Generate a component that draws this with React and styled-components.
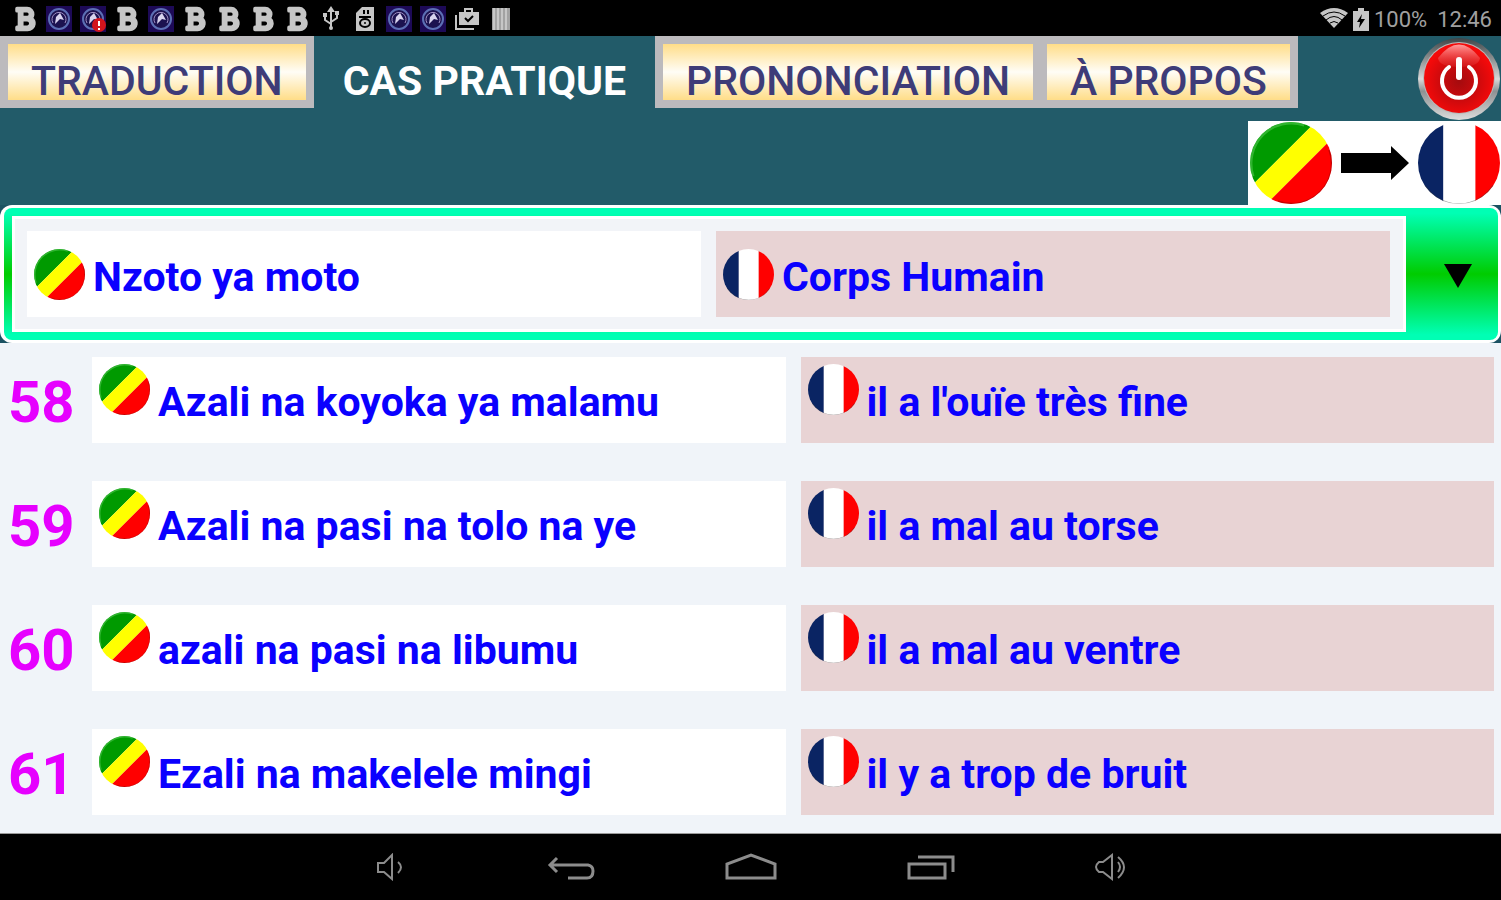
import React, { useRef, useState } from "react"
import styled, { createGlobalStyle } from 'styled-components';
import { FaBold } from 'react-icons/fa';

const GlobalStyle = createGlobalStyle`
    * {
        box-sizing: border-box;
    }

    body {
        margin: 0;
        background-color: #000;
        font-family: Roboto, "Liberation Sans", sans-serif;
    }

    button {
        padding: 0;
        border: none;
        background: none;
        font: inherit;
        cursor: pointer;
    }

    svg {
        display: block;
        flex-shrink: 0;
    }
`;

const Container = styled.div`
    display: flex;
    flex-direction: column;
    min-height: 100vh;
    background-color: #f0f4f9;
`;

const StatusBar = styled.div`
    display: flex;
    align-items: center;
    justify-content: space-between;
    height: 36px;
    padding: 0 9px 0 12px;
    background-color: #000;
    color: #c6c6c6;
`;

const Notifications = styled.div`
    display: flex;
    gap: 8px;
`;

const Slot = styled.span`
    display: flex;
    align-items: center;
    justify-content: center;
    width: 26px;
    height: 28px;
    margin-top: 2px;
`;

const BoldIcon = styled(FaBold)`
    width: 28px;
    height: 26px;
    stroke: currentColor;
    stroke-width: 36;
    overflow: visible;
`;

const SystemInfo = styled.div`
    display: flex;
    align-items: center;
    color: #a0a0a0;
    font-size: 22px;
`;

const Level = styled.span`
    margin: 2px 10px 0 0;
`;

const Clock = styled.span`
    margin-top: 2px;
`;

const Header = styled.header`
    background-color: #225b69;
`;

const TopLine = styled.div`
    display: flex;
    align-items: flex-start;
    justify-content: space-between;
    height: 85px;
`;

const Tabs = styled.nav`
    display: flex;
`;

const Tab = styled.button`
    height: 72px;
    padding: 18px 23px 0;
    border: 8px solid #bcbabd;
    border-right-width: ${props => props.$joined ? 6 : 8}px;
    background: linear-gradient(#ffdd88, #fffdf6 50%, #ffdd88);
    color: #3e3c78;
    font-size: 41px;
    font-weight: 500;
    line-height: 38px;
    white-space: nowrap;
`;

const ActiveTab = styled(Tab)`
    padding: 18px 21px 0;
    border-color: transparent;
    background: none;
    color: #fff;
    font-weight: 700;
`;

const PowerButton = styled.button`
    margin-top: 1px;
`;

const Direction = styled.button`
    display: flex;
    align-items: center;
    gap: 9px;
    height: 84px;
    margin-left: auto;
    padding: 0 1px 0 2px;
    background-color: #fff;
`;

const SpinnerArea = styled.section`
    background-color: #1b5262;
`;

const SpinnerFrame = styled.div`
    padding: 3px 3px 3px 4px;
    border-radius: 12px;
    background-color: #fff;
`;

const Spinner = styled.div`
    display: flex;
    height: 132px;
    padding: 8px 0 8px 8px;
    border-radius: 8px;
    background: linear-gradient(#00ffb4 4%, #00cc00 50%, #00ffb4 96%);
`;

const Choice = styled.div`
    display: grid;
    grid-template-columns: 1fr 1fr;
    flex-grow: 1;
    gap: 15px;
    padding: 12px 13px 12px 12px;
    border: 3px solid #fff;
    background-color: #f2f4f8;
`;

const OpenButton = styled.button`
    display: flex;
    align-items: center;
    justify-content: center;
    width: 92px;
    padding: 4px 0 0 12px;
`;

const Cell = styled.div`
    display: flex;
    align-items: center;
    gap: 8px;
    min-width: 0;
    height: 86px;
    padding: 0 7px;
    background-color: ${props => props.$french ? '#e8d3d4' : '#fff'};
    color: #0a00ff;
    font-size: 41px;
    font-weight: 700;
    white-space: nowrap;
`;

const PhraseCell = styled(Cell)`
    align-items: flex-start;
    padding-top: 7px;
    line-height: 76px;
`;

const TopicName = styled.span`
    padding-top: 6px;
`;

const TopicSelect = styled.select`
    flex-grow: 1;
    min-width: 0;
    margin: 0;
    padding: 6px 0 0;
    border: none;
    outline: none;
    appearance: none;
    background: transparent;
    color: inherit;
    font: inherit;
`;

const Phrases = styled.ol`
    display: flex;
    flex-direction: column;
    flex-grow: 1;
    gap: 38px;
    margin: 0;
    padding: 14px 7px 18px 0;
    list-style: none;
`;

const Phrase = styled.li`
    display: grid;
    grid-template-columns: 77px 1fr 1fr;
    align-items: center;
    gap: 15px;
`;

const Count = styled.span`
    padding: 4px 0 0 8px;
    color: #e600ff;
    font-size: 58px;
    font-weight: 700;
`;

const NavBar = styled.nav`
    display: flex;
    align-items: center;
    justify-content: center;
    gap: 132px;
    height: 67px;
    border-top: 1px solid #9a9a9a;
    background-color: #000;
`;

const NavButton = styled.button`
    display: flex;
    align-items: center;
    justify-content: center;
    width: 48px;
    height: 48px;
`;

const Round = styled.svg`
    border-radius: 50%;
`;

function CongoFlag({ size }) {
    return (
        <Round width={size} height={size} viewBox="0 0 100 100" aria-hidden="true">
            <path fill="#009a00" d="M0 0H80L0 80Z" />
            <path fill="#ffff00" d="M80 0H100V20L20 100H0V80Z" />
            <path fill="#ff0000" d="M100 20V100H20Z" />
            <path d="M4 66A49 49 0 0 1 66 4" fill="none" stroke="#4fc64f" strokeWidth="3" opacity=".6" />
            <path d="M34 97A49 49 0 0 0 97 34" fill="none" stroke="#8a0000" strokeWidth="3" opacity=".5" />
        </Round>
    )
}

function FranceFlag({ size }) {
    return (
        <Round width={size} height={size} viewBox="0 0 100 100" aria-hidden="true">
            <path fill="#0a2463" d="M0 0H31V100H0Z" />
            <path fill="#ffffff" d="M31 0H70V100H31Z" />
            <path fill="#ff0000" d="M70 0H100V100H70Z" />
            <path d="M8 78A50 50 0 0 0 92 78" fill="none" stroke="#333" strokeWidth="3" opacity=".45" />
        </Round>
    )
}

function AppBadge({ alert }) {
    return (
        <svg width="26" height="26" viewBox="0 0 26 26">
            <path fill="#1d0a57" d="M0 0H26V26H0Z" />
            <circle cx="13" cy="13" r="10" fill="#1c1250" stroke="#5c6fb4" strokeWidth="2" />
            <path fill="none" stroke="#a08fc4" strokeWidth="1" d="M7 17A7 7 0 1 1 19 17" />
            <path fill="#d9d4ee" d="M14 7L18 14L14 13L9 18L10 11Z" />
            {alert && <circle cx="19" cy="19" r="7" fill="#d3141c" />}
            {alert && <path d="M19 15V20M19 22V24" stroke="#fff" strokeWidth="2" />}
        </svg>
    )
}

function UsbIcon() {
    return (
        <svg width="18" height="26" viewBox="0 0 18 26" fill="none" stroke="currentColor" strokeWidth="2">
            <path d="M9 4V22M9 18L3 14V9M9 16L15 12V8" />
            <path fill="currentColor" stroke="none" d="M9 0L13 6H5ZM1 7H5V11H1ZM13 5H17V9H13Z" />
            <circle cx="9" cy="22" r="2" fill="currentColor" stroke="none" />
        </svg>
    )
}

function CardIcon() {
    return (
        <svg width="18" height="24" viewBox="0 0 18 24">
            <path fill="currentColor" d="M6 0H18V24H0V6Z" />
            <path fill="#000" d="M7 3H9V7H7ZM11 3H13V7H11ZM3 9H15V11H3Z" />
            <ellipse cx="9" cy="16" rx="5" ry="4" fill="none" stroke="#000" strokeWidth="2" />
            <circle cx="9" cy="16" r="1" />
        </svg>
    )
}

function BagIcon() {
    return (
        <svg width="24" height="22" viewBox="0 0 24 22" fill="none" stroke="currentColor" strokeWidth="2">
            <path d="M1 7V21H19" />
            <path d="M10 4V1H17V4" />
            <path fill="currentColor" stroke="none" d="M4 4H24V17H4Z" />
            <path stroke="#000" d="M10 10L13 13L18 8" />
        </svg>
    )
}

function BarsIcon() {
    return (
        <svg width="18" height="22" viewBox="0 0 18 22">
            <path fill="#a2a2a2" d="M0 0H18V22H0Z" />
            <path stroke="#c6c6c6" strokeWidth="2" d="M2 0V22M6 0V22M10 0V22M14 0V22" />
        </svg>
    )
}

function WifiIcon() {
    return (
        <svg width="28" height="20" viewBox="0 0 28 20">
            <path fill="#c6c6c6" d="M0 5Q14 -5 28 5L14 20Z" />
            <path fill="none" stroke="#000" strokeWidth="1" d="M3 8Q14 0 25 8M6 12Q14 5 22 12M10 15Q14 12 18 15" />
        </svg>
    )
}

function BatteryIcon() {
    return (
        <svg width="16" height="23" viewBox="0 0 16 23">
            <path fill="#c6c6c6" d="M5 0H11V3H16V23H0V3H5Z" />
            <path fill="#000" d="M9 6L4 14H7L6 20L12 11H8Z" />
        </svg>
    )
}

function PowerIcon() {
    return (
        <svg width="84" height="84" viewBox="0 0 84 84" aria-hidden="true">
            <defs>
                <linearGradient id="rim" x1="0" y1="0" x2="0" y2="1">
                    <stop offset="0" stopColor="#3d4548" />
                    <stop offset=".25" stopColor="#8b8f90" />
                    <stop offset=".5" stopColor="#d8d8d8" />
                    <stop offset=".65" stopColor="#8d9193" />
                    <stop offset="1" stopColor="#dcdcdc" />
                </linearGradient>
                <radialGradient id="core" cx=".5" cy=".55" r=".5">
                    <stop offset="0" stopColor="#a50b0e" />
                    <stop offset=".5" stopColor="#c90a0d" />
                    <stop offset="1" stopColor="#f50a0a" />
                </radialGradient>
                <linearGradient id="gloss" x1="0" y1="0" x2="0" y2="1">
                    <stop offset="0" stopColor="#ff9c9c" />
                    <stop offset="1" stopColor="#e83030" stopOpacity=".3" />
                </linearGradient>
            </defs>
            <circle cx="42" cy="42" r="41" fill="url(#rim)" />
            <circle cx="42" cy="41" r="36" fill="#b9b9b9" />
            <circle cx="42" cy="41" r="35" fill="url(#core)" />
            <path fill="url(#gloss)" d="M21 21Q42 -6 63 21Q62 30 42 30Q22 30 21 21Z" />
            <path fill="none" stroke="#fff" strokeWidth="4" strokeLinecap="round" d="M32 30A17 17 0 1 0 52 30" />
            <path stroke="#fff" strokeWidth="6" strokeLinecap="round" d="M42 23V40" />
        </svg>
    )
}

function ArrowIcon() {
    return (
        <svg width="68" height="36" viewBox="0 0 68 36" aria-hidden="true">
            <path d="M0 8H50V1L68 18L50 35V28H0Z" />
        </svg>
    )
}

const navIcons = [
    {
        label: 'Volume -',
        width: 28,
        path: <path strokeWidth="2" d="M1 10H7L15 2V26L7 19H1ZM21 9Q27 14 21 20" />,
    },
    {
        label: 'Retour',
        width: 48,
        path: <path strokeWidth="3" d="M10 5L3 12L10 19M4 12H41Q46 13 46 18Q46 25 40 25H21" />,
    },
    {
        label: 'Accueil',
        width: 52,
        path: <path strokeWidth="3" d="M2 25V11L26 2L50 11V25Z" />,
    },
    {
        label: 'Applications',
        width: 48,
        path: <path strokeWidth="3" d="M2 11H38V25H2ZM11 4H46V19" />,
    },
    {
        label: 'Volume +',
        width: 34,
        path: <path strokeWidth="2" d="M5 9H9L18 2V26L9 19H5Q-1 14 5 9ZM24 9Q28 14 24 19M24 4Q36 14 24 25" />,
    },
];

const notifications = [
    'bold', 'badge', 'alert', 'bold', 'badge', 'bold', 'bold', 'bold', 'bold',
    'usb', 'card', 'badge', 'badge', 'bag', 'bars',
];

const notificationIcons = {
    bold: <BoldIcon />,
    badge: <AppBadge />,
    alert: <AppBadge alert />,
    usb: <UsbIcon />,
    card: <CardIcon />,
    bag: <BagIcon />,
    bars: <BarsIcon />,
};

const topics = [
    { lingala: 'Nzoto ya moto', french: 'Corps Humain' },
];

const phrases = [
    { id: 58, lingala: 'Azali na koyoka ya malamu', french: "il a l'ouïe très fine" },
    { id: 59, lingala: 'Azali na pasi na tolo na ye', french: 'il a mal au torse' },
    { id: 60, lingala: 'azali na pasi na libumu', french: 'il a mal au ventre' },
    { id: 61, lingala: 'Ezali na makelele mingi', french: 'il y a trop de bruit' },
];

export default function App() {
    const [topic, setTopic] = useState(0);
    const select = useRef(null);

    return (
        <Container>
            <GlobalStyle />
            <StatusBar>
                <Notifications>
                    {notifications.map((name, i) => <Slot key={i}>{notificationIcons[name]}</Slot>)}
                </Notifications>
                <SystemInfo>
                    <WifiIcon />
                    <Slot><BatteryIcon /></Slot>
                    <Level>100%</Level>
                    <Clock>12:46</Clock>
                </SystemInfo>
            </StatusBar>
            <Header>
                <TopLine>
                    <Tabs>
                        <Tab>TRADUCTION</Tab>
                        <ActiveTab aria-current="page">CAS PRATIQUE</ActiveTab>
                        <Tab $joined>PRONONCIATION</Tab>
                        <Tab>À PROPOS</Tab>
                    </Tabs>
                    <PowerButton aria-label="Quitter"><PowerIcon /></PowerButton>
                </TopLine>
                <Direction aria-label="Lingala vers français">
                    <CongoFlag size={82} />
                    <ArrowIcon />
                    <FranceFlag size={82} />
                </Direction>
            </Header>
            <SpinnerArea>
                <SpinnerFrame>
                    <Spinner>
                        <Choice>
                            <Cell>
                                <CongoFlag size={51} />
                                <TopicName>{topics[topic].lingala}</TopicName>
                            </Cell>
                            <Cell $french>
                                <FranceFlag size={51} />
                                <TopicSelect
                                    ref={select}
                                    aria-label="Thème"
                                    value={topic}
                                    onChange={e => setTopic(Number(e.target.value))}
                                >
                                    {topics.map((t, i) => <option key={t.french} value={i}>{t.french}</option>)}
                                </TopicSelect>
                            </Cell>
                        </Choice>
                        <OpenButton aria-label="Choisir un thème" onClick={() => select.current.showPicker()}>
                            <svg width="28" height="24" viewBox="0 0 28 24" aria-hidden="true">
                                <path d="M0 0H28L14 24Z" />
                            </svg>
                        </OpenButton>
                    </Spinner>
                </SpinnerFrame>
            </SpinnerArea>
            <Phrases>
                {phrases.map(phrase => (
                    <Phrase key={phrase.id}>
                        <Count>{phrase.id}</Count>
                        <PhraseCell>
                            <CongoFlag size={51} />
                            <span>{phrase.lingala}</span>
                        </PhraseCell>
                        <PhraseCell $french>
                            <FranceFlag size={51} />
                            <span>{phrase.french}</span>
                        </PhraseCell>
                    </Phrase>
                ))}
            </Phrases>
            <NavBar>
                {navIcons.map(icon => (
                    <NavButton key={icon.label} aria-label={icon.label}>
                        <svg width={icon.width} height="28" viewBox={`0 0 ${icon.width} 28`} fill="none" stroke="#8c8c8c">
                            {icon.path}
                        </svg>
                    </NavButton>
                ))}
            </NavBar>
        </Container>
    )
}
